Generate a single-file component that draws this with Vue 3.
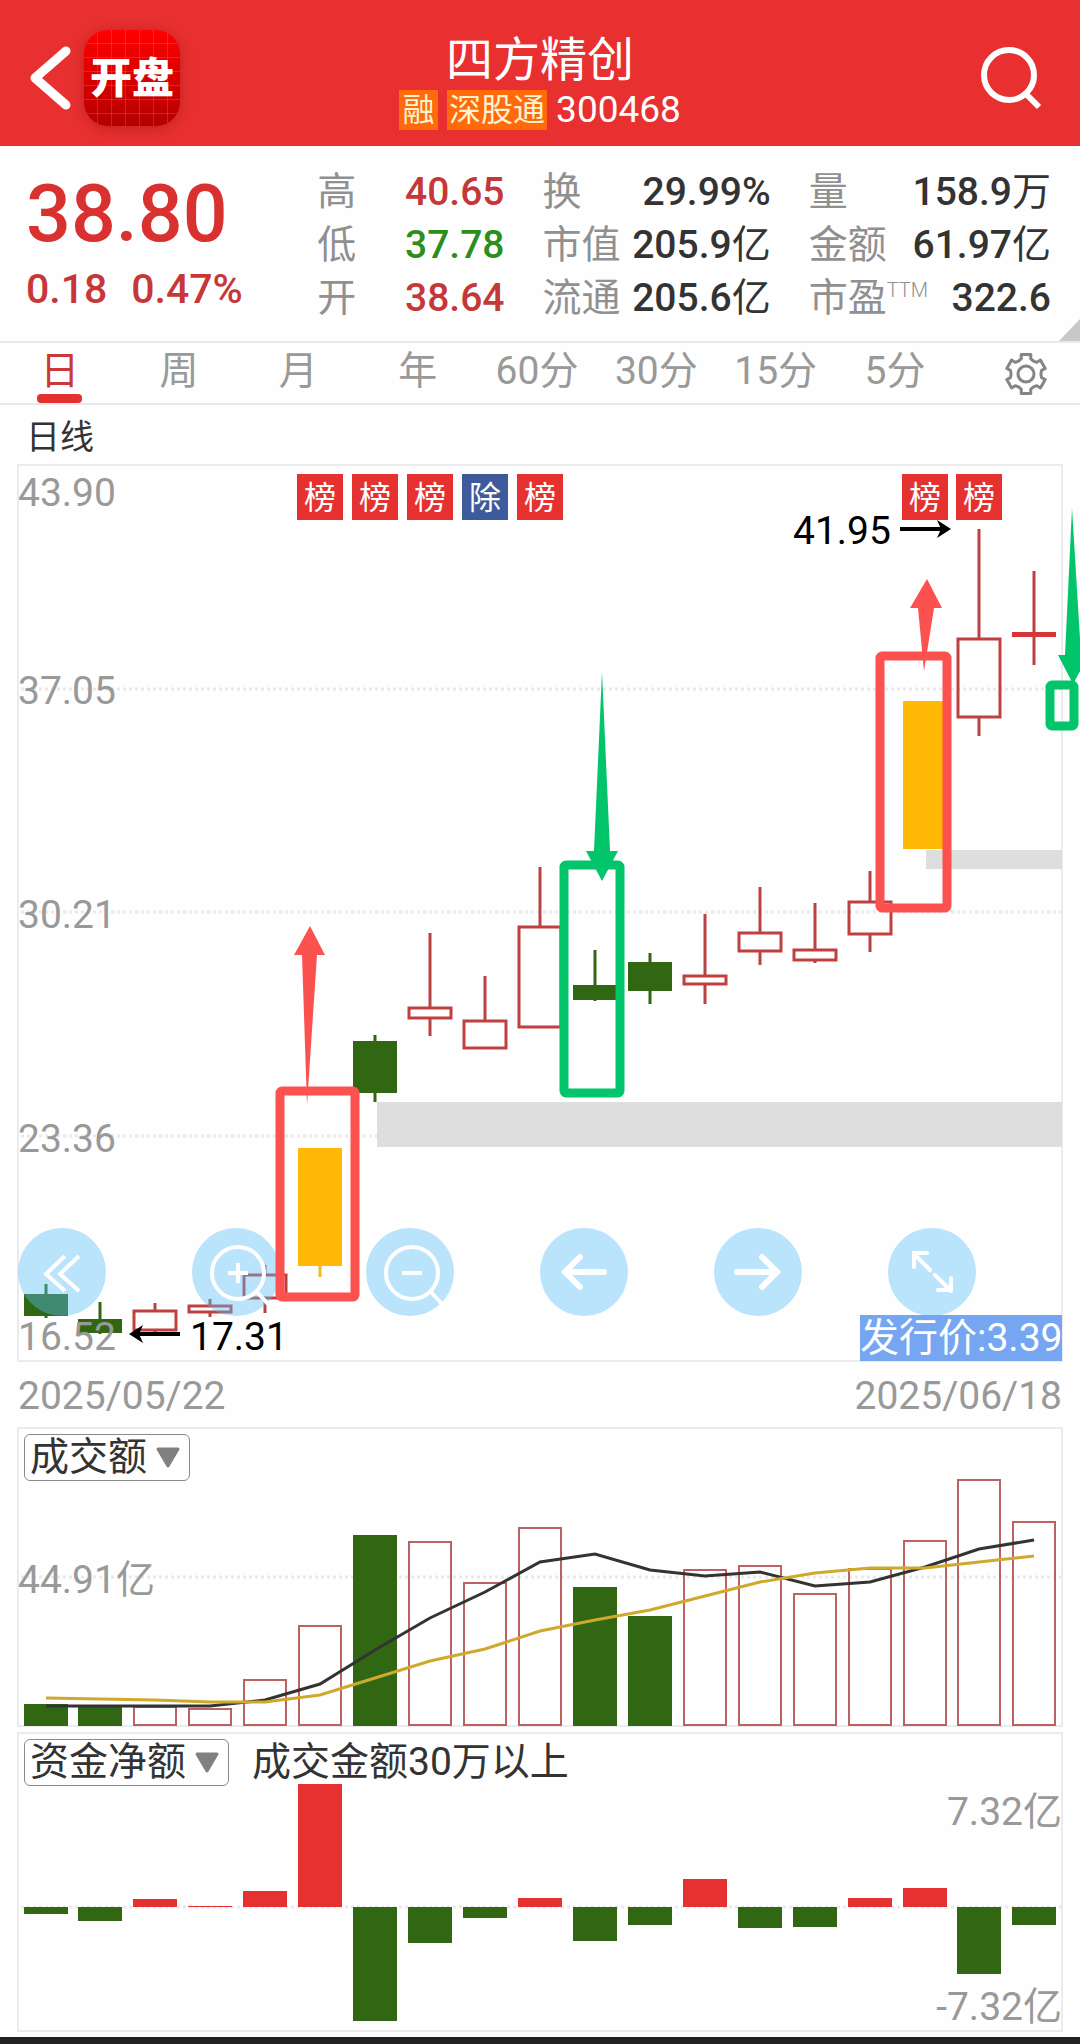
<template>
  <div class="page">
    <header class="topbar">
      <div class="topbar-left">
        <button class="icon-btn" aria-label="返回">
          <svg class="chevron" viewBox="0 0 44 66"><path d="M38 6 L7 33 L38 60" /></svg>
        </button>
        <div class="logo">开盘</div>
      </div>

      <div class="title">
        <h1>四方精创</h1>
        <div class="subtitle">
          <span class="tag">融</span>
          <span class="tag">深股通</span>
          <span>300468</span>
        </div>
      </div>

      <div class="topbar-right">
        <button class="icon-btn" aria-label="搜索">
          <svg class="search" viewBox="0 0 64 66">
            <circle cx="29" cy="29" r="25" />
            <path d="M46 48 L59 61" />
          </svg>
        </button>
      </div>
    </header>

    <section class="quote">
      <div class="price">
        <div class="last">38.80</div>
        <div class="change"><span>0.18</span><span>0.47%</span></div>
      </div>
      <dl v-for="(group, g) in stats" :key="g" class="stats">
        <div v-for="item in group" :key="item.label" class="stat">
          <dt>{{ item.label }}<sup v-if="item.sup">{{ item.sup }}</sup></dt>
          <dd :class="item.tone">{{ item.value }}<i v-if="item.unit">{{ item.unit }}</i></dd>
        </div>
      </dl>
      <span class="corner"></span>
    </section>

    <nav class="tabs">
      <button
        v-for="tab in tabs"
        :key="tab"
        class="tab"
        :class="{ active: tab === activeTab }"
        @click="activeTab = tab"
      >
        {{ tab }}
      </button>
      <button class="tab settings" aria-label="设置">
        <svg viewBox="0 0 42 44">
          <path :d="gearPath" />
          <circle cx="21" cy="22" r="8" />
        </svg>
      </button>
    </nav>

    <div class="caption">日线</div>

    <div class="panel">
      <svg class="chart" viewBox="0 464 1080 898">
        <rect class="frame" x="18" y="465" width="1044" height="896" />
        <line v-for="y in [689, 912, 1136]" :key="y" class="dots" x1="21" x2="1062" :y1="y" :y2="y" />
        <rect class="band" x="377" y="1102" width="685" height="45" />
        <rect class="band" x="926" y="850" width="136" height="19" />

        <g v-for="(c, i) in candles" :key="i" :class="c.kind">
          <line class="wick" :x1="cx(i)" :x2="cx(i)" :y1="c.high" :y2="c.top" />
          <line class="wick" :x1="cx(i)" :x2="cx(i)" :y1="c.bottom" :y2="c.low" />
          <rect
            v-if="c.kind === 'rise'"
            class="body"
            :x="cx(i) - 21"
            :y="c.top + 1"
            width="42"
            :height="c.bottom - c.top - 2"
          />
          <rect v-else class="body" :x="cx(i) - 22" :y="c.top" width="44" :height="c.bottom - c.top" />
        </g>

        <g v-for="b in badges" :key="b.at">
          <rect :class="b.text === '除' ? 'badge-blue' : 'badge-red'" :x="cx(b.at) - 23" y="474" width="46" height="46" />
          <text class="badge-text" :x="cx(b.at)" y="509">{{ b.text }}</text>
        </g>

        <text v-for="a in priceAxis" :key="a.label" class="axis" x="18" :y="a.y">{{ a.label }}</text>

        <g class="extreme">
          <text x="793" y="544">41.95</text>
          <path class="line" d="M900 529 H948" />
          <path d="M951 529 L937 520 L941 529 L937 538 Z" />
          <text x="190" y="1350">17.31</text>
          <path class="line" d="M133 1334 H180" />
          <path d="M129 1334 L143 1325 L139 1334 L143 1343 Z" />
        </g>

        <rect class="issue-box" x="860" y="1315" width="202" height="46" />
        <text class="issue-text" x="860" y="1351">发行价:3.39</text>
      </svg>

      <div class="controls">
        <button v-for="ctl in controls" :key="ctl.name" class="control" :aria-label="ctl.name">
          <svg viewBox="0 0 88 88"><path :d="ctl.d" :stroke-width="ctl.w" :stroke-linecap="ctl.cap" /></svg>
        </button>
      </div>

      <svg class="chart marks" viewBox="0 464 1080 898">
        <g class="mark-red">
          <rect x="280" y="1091" width="75" height="206" rx="2" />
          <rect x="880" y="656" width="67" height="252" rx="2" />
          <path d="M310 926 L325 955 L317 955 L307 1105 L302 955 L294 955 Z" />
          <path d="M927 579 L942 608 L934 608 L924 671 L918 608 L910 608 Z" />
        </g>
        <g class="mark-green">
          <rect x="564" y="865" width="56" height="228" rx="2" />
          <rect x="1050" y="685" width="24" height="41" rx="2" />
          <path d="M602 672 L610 851 L618 851 L602 881 L586 851 L594 851 Z" />
          <path d="M1072 508 L1081 655 L1089 655 L1073 684 L1058 655 L1065 655 Z" />
        </g>
      </svg>
    </div>

    <div class="dates"><span>2025/05/22</span><span>2025/06/18</span></div>

    <div class="panel">
      <svg class="chart" viewBox="0 1427 1080 300">
        <rect class="frame" x="18" y="1428" width="1044" height="298" />
        <line class="dots" x1="21" x2="1062" y1="1577" y2="1577" />
        <template v-for="(top, i) in volumes" :key="i">
          <rect v-if="falls.includes(i)" class="vol-fall" :x="cx(i) - 22" :y="top" width="44" :height="1726 - top" />
          <rect v-else class="vol-rise" :x="cx(i) - 21" :y="top" width="42" :height="1725 - top" />
        </template>
        <polyline class="ma-short" :points="toPoints(maShort)" />
        <polyline class="ma-long" :points="toPoints(maLong)" />
        <text class="axis" x="18" y="1593">44.91亿</text>
      </svg>
      <div class="toolbar">
        <div class="picker">
          <select aria-label="指标一"><option>成交额</option></select>
          <svg viewBox="0 0 26 22"><path d="M3 2 H23 L13 19 Z" /></svg>
        </div>
      </div>
    </div>

    <div class="panel flow">
      <svg class="chart" viewBox="0 1732 1080 300">
        <rect class="frame" x="18" y="1733" width="1044" height="298" />
        <line class="dots" x1="21" x2="1062" y1="1907" y2="1907" />
        <rect
          v-for="(y, i) in flows"
          :key="i"
          :class="y < 1907 ? 'flow-in' : 'flow-out'"
          :x="cx(i) - 22"
          :y="Math.min(y, 1907)"
          width="44"
          :height="Math.abs(y - 1907)"
        />
        <text class="axis end" x="1062" y="1825">7.32亿</text>
        <text class="axis end" x="1062" y="2020">-7.32亿</text>
      </svg>
      <div class="toolbar">
        <div class="picker">
          <select aria-label="指标二"><option>资金净额</option></select>
          <svg viewBox="0 0 26 22"><path d="M3 2 H23 L13 19 Z" /></svg>
        </div>
        <span>成交金额30万以上</span>
      </div>
    </div>

    <footer class="bottom"></footer>
  </div>
</template>

<script setup>
import { ref } from 'vue'

const stats = [
  [
    { label: '高', value: '40.65', tone: 'up' },
    { label: '低', value: '37.78', tone: 'down' },
    { label: '开', value: '38.64', tone: 'up' }
  ],
  [
    { label: '换', value: '29.99%' },
    { label: '市值', value: '205.9', unit: '亿' },
    { label: '流通', value: '205.6', unit: '亿' }
  ],
  [
    { label: '量', value: '158.9', unit: '万' },
    { label: '金额', value: '61.97', unit: '亿' },
    { label: '市盈', sup: 'TTM', value: '322.6' }
  ]
]

const tabs = ['日', '周', '月', '年', '60分', '30分', '15分', '5分']
const activeTab = ref('日')

// six-toothed cog around (21, 22)
function buildGear() {
  const pts = []
  for (let k = 0; k < 6; k++) {
    const shape = [[-27, 15], [-17, 16], [-14, 20], [14, 20], [17, 16], [27, 15]]
    for (const [deg, r] of shape) {
      const a = ((k * 60 - 90 + deg) * Math.PI) / 180
      pts.push(`${(21 + r * Math.cos(a)).toFixed(1)} ${(22 + r * Math.sin(a)).toFixed(1)}`)
    }
  }
  return 'M' + pts.join(' L') + ' Z'
}
const gearPath = buildGear()

const cx = (i) => Math.round(45.5 + i * 54.94)
const toPoints = (list) => list.map((y, i) => `${cx(i)},${y}`).join(' ')

// kind, body top, body bottom, high, low
const candles = [
  ['fall', 1294, 1316, 1284, 1318],
  ['fall', 1319, 1333, 1302, 1334],
  ['rise', 1310, 1331, 1303, 1333],
  ['rise', 1305, 1313, 1299, 1317],
  ['rise', 1274, 1299, 1265, 1313],
  ['limit', 1148, 1266, 1148, 1277],
  ['fall', 1041, 1093, 1035, 1102],
  ['rise', 1007, 1019, 933, 1036],
  ['rise', 1020, 1049, 976, 1049],
  ['rise', 926, 1028, 867, 1028],
  ['fall', 985, 1000, 950, 1001],
  ['fall', 962, 991, 953, 1004],
  ['rise', 975, 985, 914, 1004],
  ['rise', 932, 952, 887, 965],
  ['rise', 949, 961, 903, 963],
  ['rise', 901, 935, 871, 952],
  ['limit', 701, 849, 701, 849],
  ['rise', 638, 718, 529, 736],
  ['flat', 632, 637, 571, 665]
].map(([kind, top, bottom, high, low]) => ({ kind, top, bottom, high, low }))

const badges = [
  { at: 5, text: '榜' },
  { at: 6, text: '榜' },
  { at: 7, text: '榜' },
  { at: 8, text: '除' },
  { at: 9, text: '榜' },
  { at: 16, text: '榜' },
  { at: 17, text: '榜' }
]

const priceAxis = [
  { label: '43.90', y: 506 },
  { label: '37.05', y: 704 },
  { label: '30.21', y: 928 },
  { label: '23.36', y: 1152 },
  { label: '16.52', y: 1350 }
]

const controls = [
  { name: '收起', w: 4, cap: 'butt', d: 'M47 28 L28 46 L47 63 M61 28 L42 46 L61 63' },
  {
    name: '放大',
    w: 4,
    cap: 'butt',
    d: 'M20 45 a26 26 0 1 1 52 0 a26 26 0 1 1 -52 0 M36 45 H56 M46 35 V55 M64 63 L76 76'
  },
  {
    name: '缩小',
    w: 4,
    cap: 'butt',
    d: 'M20 45 a26 26 0 1 1 52 0 a26 26 0 1 1 -52 0 M36 45 H56 M64 63 L76 76'
  },
  { name: '左移', w: 6, cap: 'round', d: 'M64 44 H25 M40 29 L25 44 L40 59' },
  { name: '右移', w: 6, cap: 'round', d: 'M23 44 H63 M48 29 L63 44 L48 59' },
  {
    name: '全屏',
    w: 4,
    cap: 'round',
    d: 'M42 42 L26 26 M26 39 V25 H39 M47 47 L63 63 M50 62 H63 V50'
  }
]

const falls = [0, 1, 6, 10, 11]
const volumes = [
  1704, 1706, 1707, 1709, 1680, 1626, 1535, 1542, 1583, 1528,
  1587, 1616, 1570, 1566, 1594, 1569, 1541, 1480, 1522
]
const maShort = [
  1706, 1706, 1706, 1706, 1700, 1684, 1650, 1618, 1592, 1562,
  1554, 1570, 1576, 1572, 1586, 1582, 1567, 1549, 1540
]
const maLong = [
  1698, 1699, 1700, 1702, 1702, 1695, 1678, 1661, 1649, 1631,
  1620, 1610, 1596, 1582, 1573, 1568, 1568, 1562, 1556
]
const flows = [
  1914, 1921, 1899, 1906, 1891, 1784, 2021, 1943, 1918, 1898,
  1941, 1925, 1879, 1928, 1927, 1898, 1888, 1974, 1925
]
</script>

<style>
body {
  background: #fff;
}
</style>

<style scoped>
.page {
  min-height: 100vh;
  display: flex;
  flex-direction: column;
  background: #fefefe;
  color: #333;
  font-family: Roboto, 'Noto Sans CJK SC', sans-serif;
  font-size: 39px;
  line-height: 46px;
  overflow-x: hidden;
}

button,
select {
  font: inherit;
  color: inherit;
  background: none;
  border: 0;
  padding: 0;
  cursor: pointer;
}

.topbar {
  height: 146px;
  background: #e83030;
  color: #fff;
  display: grid;
  grid-template-columns: 1fr auto 1fr;
  align-items: center;
}

.topbar-left {
  display: flex;
  align-items: center;
  gap: 12px;
  padding: 10px 0 0 28px;
}

.topbar-right {
  display: flex;
  justify-content: flex-end;
  padding: 12px 36px 0 0;
}

.icon-btn {
  display: flex;
}

.chevron {
  width: 44px;
  height: 66px;
  fill: none;
  stroke: #fff;
  stroke-width: 9;
  stroke-linecap: round;
  stroke-linejoin: round;
}

.search {
  width: 64px;
  height: 66px;
  fill: none;
  stroke: #fff;
  stroke-width: 6;
}

.logo {
  width: 96px;
  height: 96px;
  border-radius: 24px;
  background:
    repeating-linear-gradient(90deg, transparent 0 13px, rgba(255, 120, 120, 0.28) 13px 14px),
    repeating-linear-gradient(180deg, transparent 0 13px, rgba(255, 120, 120, 0.28) 13px 14px),
    linear-gradient(#ff0000, #b40000);
  box-shadow: 0 2px 14px rgba(120, 0, 0, 0.35);
  font-size: 42px;
  font-weight: 900;
  line-height: 98px;
  text-align: center;
}

.title {
  text-align: center;
  padding-top: 14px;
}

.title h1 {
  margin: 0;
  font-size: 47px;
  font-weight: 400;
  line-height: 60px;
}

.subtitle {
  display: flex;
  align-items: center;
  justify-content: center;
  gap: 9px;
  font-size: 37px;
  line-height: 40px;
}

.tag {
  min-width: 35px;
  padding: 0 2px;
  background: #ff6a0c;
  color: #fff3d0;
  font-size: 32px;
}

.quote {
  position: relative;
  display: grid;
  grid-template-columns: 253fr 187fr 228fr 242fr;
  column-gap: 38px;
  padding: 20px 29px 14px 26px;
  height: 195px;
  box-sizing: border-box;
}

.price {
  color: #d93030;
  font-weight: 500;
}

.last {
  font-size: 79px;
  line-height: 96px;
}

.change {
  display: flex;
  gap: 24px;
  font-size: 41px;
  line-height: 54px;
  color: #c83737;
}

.stats {
  margin: 0;
}

.stat {
  display: flex;
  justify-content: space-between;
  line-height: 53px;
  white-space: nowrap;
}

.stat dt {
  color: #909090;
}

.stat sup {
  font-size: 20px;
  line-height: 20px;
  font-weight: 300;
  vertical-align: 14px;
}

.stat dd {
  margin: 0;
  font-weight: 500;
  color: #333;
}

.stat dd i {
  font-style: normal;
  font-weight: 400;
}

.stat .up {
  color: #c43838;
}

.stat .down {
  color: #2c8f1c;
}

.corner {
  position: absolute;
  right: 0;
  bottom: 0;
  border-left: 21px solid transparent;
  border-bottom: 22px solid #c8c8c8;
}

.tabs {
  display: grid;
  grid-template-columns: repeat(9, 1fr);
  height: 64px;
  box-sizing: border-box;
  padding-right: 6px;
  border-top: 2px solid #e9e9e9;
  border-bottom: 2px solid #e9e9e9;
}

.tab {
  position: relative;
  color: #999;
  line-height: 56px;
  height: 60px;
  padding-bottom: 4px;
  white-space: nowrap;
}

.tab.active {
  color: #c83a3a;
}

.tab.active::after {
  content: '';
  position: absolute;
  left: 50%;
  bottom: 0;
  width: 45px;
  margin-left: -23px;
  height: 9px;
  border-radius: 4px;
  background: #e53030;
}

.settings {
  display: flex;
  align-items: center;
  justify-content: center;
  padding: 2px 0 0 24px;
}

.settings svg {
  width: 42px;
  height: 44px;
  fill: none;
  stroke: #858585;
  stroke-width: 3;
  stroke-linejoin: round;
}

.caption {
  padding: 9px 26px 4px;
  font-size: 34px;
}

.panel {
  position: relative;
}

.chart {
  display: block;
  width: 100%;
  height: auto;
}

.marks {
  position: absolute;
  inset: 0;
  pointer-events: none;
}

.frame {
  fill: none;
  stroke: #ebebeb;
  stroke-width: 2;
}

.dots {
  stroke: #e9e9e9;
  stroke-width: 3;
  stroke-dasharray: 3 3;
}

.band {
  fill: #dedede;
}

.wick {
  stroke-width: 3;
}

.rise .wick,
.flat .wick {
  stroke: #bb4242;
}

.rise .body {
  fill: none;
  stroke: #bf4040;
  stroke-width: 3;
}

.flat .body {
  fill: #d33636;
}

.fall .wick {
  stroke: #316613;
}

.fall .body,
.vol-fall,
.flow-out {
  fill: #316613;
}

.limit .wick {
  stroke: #f2b920;
}

.limit .body {
  fill: #ffb803;
}

.badge-red,
.flow-in {
  fill: #e63131;
}

.badge-blue {
  fill: #3d5a9c;
}

.badge-text {
  fill: #fff;
  font-size: 32px;
  text-anchor: middle;
}

.axis {
  fill: #999;
  font-size: 39px;
}

.end {
  text-anchor: end;
}

.extreme {
  fill: #000;
}

.extreme .line {
  stroke: #000;
  stroke-width: 4;
}

.issue-box {
  fill: #76a5f2;
}

.issue-text {
  fill: #fff;
}

.controls {
  position: absolute;
  left: 18px;
  right: 104px;
  bottom: 46px;
  display: flex;
  justify-content: space-between;
}

.control {
  width: 88px;
  height: 88px;
  border-radius: 50%;
  background: rgba(90, 190, 251, 0.41);
}

.control svg {
  display: block;
  fill: none;
  stroke: #fff;
}

.mark-red rect,
.mark-green rect {
  fill: none;
  stroke-width: 9;
  stroke-linejoin: round;
}

.mark-red rect {
  stroke: #fb5250;
}

.mark-red path {
  fill: #fb5250;
}

.mark-green rect {
  stroke: #02c46a;
}

.mark-green path {
  fill: #02c46a;
}

.dates {
  display: flex;
  justify-content: space-between;
  padding: 3px 18px 0;
  color: #999;
  line-height: 62px;
}

.vol-rise {
  fill: none;
  stroke: #bd6262;
  stroke-width: 2;
}

.ma-short,
.ma-long {
  fill: none;
  stroke-width: 3;
}

.ma-short {
  stroke: #333;
}

.ma-long {
  stroke: #cfa92c;
}

.flow {
  margin-top: 5px;
}

.toolbar {
  position: absolute;
  left: 24px;
  top: 7px;
  display: flex;
  gap: 23px;
}

.picker {
  display: flex;
  align-items: center;
  box-sizing: border-box;
  height: 47px;
  border: 1px solid #8a8a8a;
  border-radius: 6px;
  position: relative;
}

.picker select {
  appearance: none;
  height: 45px;
  padding: 0 41px 0 5px;
  line-height: 45px;
}

.picker svg {
  position: absolute;
  right: 8px;
  width: 26px;
  height: 22px;
  fill: #808080;
  stroke: #808080;
  stroke-width: 3;
  stroke-linejoin: round;
  pointer-events: none;
}

.bottom {
  flex: 1;
  margin-top: 5px;
  min-height: 7px;
  background: #222;
}
</style>
